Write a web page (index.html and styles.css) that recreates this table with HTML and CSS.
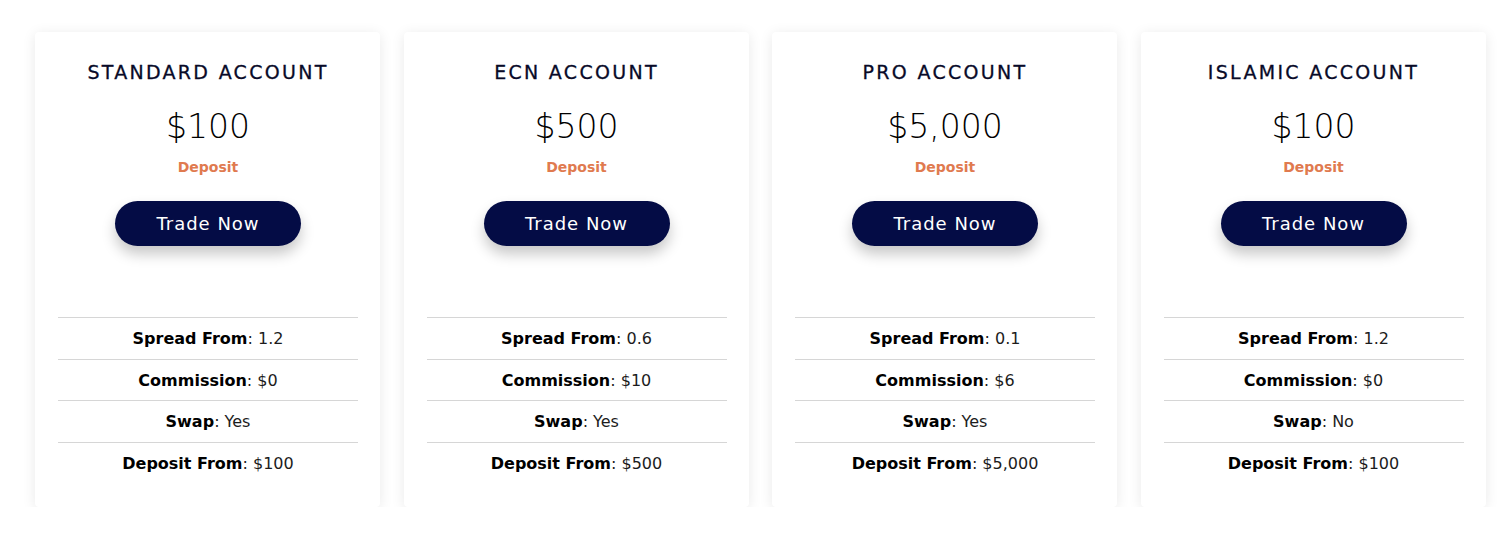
FILE: index.html
```html
<!DOCTYPE html>
<html>
<head>
<meta charset="utf-8">
<link rel="stylesheet" href="styles.css">
</head>
<body>
<div class="plans">
  <div class="card">
    <h2 class="title">STANDARD ACCOUNT</h2>
    <div class="price">$100</div>
    <div class="label">Deposit</div>
    <a class="btn">Trade Now</a>
    <ul class="specs">
      <li><b>Spread From</b>: 1.2</li>
      <li><b>Commission</b>: $0</li>
      <li><b>Swap</b>: Yes</li>
      <li><b>Deposit From</b>: $100</li>
    </ul>
  </div>
  <div class="card">
    <h2 class="title">ECN ACCOUNT</h2>
    <div class="price">$500</div>
    <div class="label">Deposit</div>
    <a class="btn">Trade Now</a>
    <ul class="specs">
      <li><b>Spread From</b>: 0.6</li>
      <li><b>Commission</b>: $10</li>
      <li><b>Swap</b>: Yes</li>
      <li><b>Deposit From</b>: $500</li>
    </ul>
  </div>
  <div class="card">
    <h2 class="title">PRO ACCOUNT</h2>
    <div class="price">$5,000</div>
    <div class="label">Deposit</div>
    <a class="btn">Trade Now</a>
    <ul class="specs">
      <li><b>Spread From</b>: 0.1</li>
      <li><b>Commission</b>: $6</li>
      <li><b>Swap</b>: Yes</li>
      <li><b>Deposit From</b>: $5,000</li>
    </ul>
  </div>
  <div class="card">
    <h2 class="title">ISLAMIC ACCOUNT</h2>
    <div class="price">$100</div>
    <div class="label">Deposit</div>
    <a class="btn">Trade Now</a>
    <ul class="specs">
      <li><b>Spread From</b>: 1.2</li>
      <li><b>Commission</b>: $0</li>
      <li><b>Swap</b>: No</li>
      <li><b>Deposit From</b>: $100</li>
    </ul>
  </div>
</div>
</body>
</html>
```
FILE: styles.css
```css
html, body {
  margin: 0;
  padding: 0;
  background: #ffffff;
}
body {
  font-family: "DejaVu Sans", "Noto Sans", sans-serif;
  color: #111;
}
.plans {
  display: grid;
  grid-template-columns: repeat(4, 345px);
  column-gap: 23.5px;
  padding: 32px 0 0 35px;
}
.card {
  background: #fff;
  border-radius: 4px;
  box-shadow: 0 2px 14px rgba(0, 0, 0, 0.09);
  padding: 28px 22px 23px 23px;
  display: flex;
  flex-direction: column;
  align-items: center;
}
.title {
  margin: 0;
  font-size: 19px;
  line-height: 24px;
  font-weight: 400;
  letter-spacing: 2.3px;
  color: #080a28;
  -webkit-text-stroke: 0.3px #080a28;
}
.price {
  margin-top: 23px;
  font-size: 33px;
  line-height: 40px;
  font-weight: 300;
  color: #000;
}
.label {
  margin-top: 10px;
  font-size: 14px;
  line-height: 20px;
  font-weight: 600;
  color: #e07a4f;
}
.btn {
  margin-top: 24px;
  width: 186px;
  height: 45px;
  border-radius: 23px;
  background: #040c45;
  color: #fff;
  font-size: 18px;
  font-weight: 400;
  letter-spacing: 1px;
  display: flex;
  align-items: center;
  justify-content: center;
  box-shadow: 0 8px 14px rgba(0, 0, 0, 0.22);
}
.specs {
  list-style: none;
  margin: 71px 0 0 0;
  padding: 0;
  width: 100%;
}
.specs li {
  border-top: 1px solid #d6d6d6;
  height: 40.7px;
  display: flex;
  align-items: center;
  justify-content: center;
  font-size: 16px;
  font-weight: 400;
  color: #1c1c1c;
}
.specs li b {
  font-weight: 700;
  color: #000;
}
```
